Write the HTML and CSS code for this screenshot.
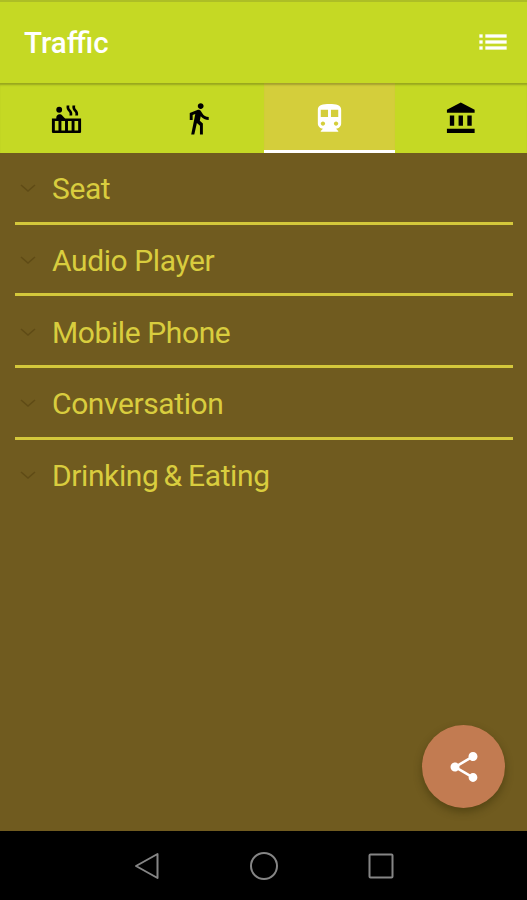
FILE: index.html
```html
<!DOCTYPE html>
<html lang="en">
<head>
  <meta charset="UTF-8">
  <meta name="viewport" content="width=device-width, initial-scale=1.0">
  <title>Traffic</title>
  <link rel="stylesheet" href="styles.css">
</head>
<body>
  <div class="app">
    <header class="toolbar">
      <h1 class="title">Traffic</h1>
      <svg class="icon menu-icon" viewBox="0 0 24 24"><path d="M3 13h2v-2H3v2zm0 4h2v-2H3v2zm0-8h2V7H3v2zm4 4h14v-2H7v2zm0 4h14v-2H7v2zM7 7v2h14V7H7z"/></svg>
    </header>

    <nav class="tabs">
      <div class="tab">
        <svg class="icon" viewBox="0 0 24 24"><circle cx="7" cy="6" r="2"/><path d="M11.15 12c-.31-.22-.59-.46-.82-.72l-1.4-1.55c-.19-.21-.43-.38-.69-.5-.29-.14-.62-.23-.96-.23h-.03C6.01 9 5 10.01 5 11.25V12H2v9c0 .6.4 1 1 1h18c.6 0 1-.4 1-1v-9H11.15zM6.500 20.300H4v-6.600h2.500v6.600zm4.500 0H8.500v-6.600H11v6.600zm4.500 0H13v-6.600h2.500v6.600zm4.500 0h-2.500v-6.600H20v6.600zM18.650 5.860l-.07-.07c-.57-.62-.82-1.410-.67-2.200L18 3h-1.890l-.06.43c-.2 1.360.27 2.710 1.300 3.720l.07.06c.57.62.82 1.410.67 2.200l-.11.59h1.910l.06-.43c.21-1.360-.27-2.710-1.300-3.710zm-4 0l-.07-.07c-.57-.62-.82-1.410-.67-2.200L14 3h-1.890l-.06.43c-.2 1.360.27 2.710 1.300 3.720l.07.06c.57.62.82 1.410.67 2.200l-.11.59h1.910l.06-.43c.21-1.360-.27-2.710-1.300-3.710z"/></svg>
      </div>
      <div class="tab">
        <svg class="icon" viewBox="0 0 24 24"><path d="M13.5 5.5c1.1 0 2-.9 2-2s-.9-2-2-2-2 .9-2 2 .9 2 2 2zM9.8 8.900L7 23h2.100l1.800-8 2.100 2v6h2v-7.500l-2.100-2 .6-3C14.800 12 16.800 13 19 13v-2c-1.900 0-3.500-1-4.300-2.400l-1-1.600c-.4-.6-1-1-1.700-1-.3 0-.5.1-.8.1L6 8.300V13h2V9.600l1.800-.7"/></svg>
      </div>
      <div class="tab active">
        <svg class="icon" viewBox="0 0 24 24"><path d="M12 2c-4.420 0-8 .5-8 4v9.500C4 17.430 5.570 19 7.500 19L6 20.500v.5h12v-.5L16.500 19c1.930 0 3.500-1.570 3.500-3.500V6c0-3.500-3.580-4-8-4zM7.500 17c-.83 0-1.500-.67-1.500-1.500S6.670 14 7.500 14s1.500.67 1.500 1.500S8.330 17 7.500 17zm3.500-6H6V6h5v5zm5.500 6c-.83 0-1.500-.67-1.500-1.500s.67-1.500 1.500-1.500 1.500.67 1.500 1.500-.67 1.500-1.500 1.500zm1.500-6h-5V6h5v5z"/></svg>
      </div>
      <div class="tab">
        <svg class="icon" viewBox="0 0 24 24"><path d="M4 10v7h3v-7H4zm6 0v7h3v-7h-3zM2 22h19v-3H2v3zm14-12v7h3v-7h-3zm-4.500-9L2 6v2h19V6l-9.500-5z"/></svg>
      </div>
    </nav>

    <main class="content">
      <ul class="list">
        <li class="item"><svg class="chevron" viewBox="0 0 16 9"><path d="M1 1l7 6 7-6"/></svg><span>Seat</span></li>
        <li class="item"><svg class="chevron" viewBox="0 0 16 9"><path d="M1 1l7 6 7-6"/></svg><span>Audio Player</span></li>
        <li class="item"><svg class="chevron" viewBox="0 0 16 9"><path d="M1 1l7 6 7-6"/></svg><span>Mobile Phone</span></li>
        <li class="item"><svg class="chevron" viewBox="0 0 16 9"><path d="M1 1l7 6 7-6"/></svg><span>Conversation</span></li>
        <li class="item"><svg class="chevron" viewBox="0 0 16 9"><path d="M1 1l7 6 7-6"/></svg><span>Drinking<span class="amp">&amp;</span>Eating</span></li>
      </ul>
      <div class="fab">
        <svg class="icon share-icon" viewBox="0 0 24 24"><path d="M18 16.080c-.76 0-1.440.3-1.960.77L8.910 12.700c.05-.23.09-.46.09-.7s-.04-.47-.09-.7l7.050-4.110c.54.5 1.250.81 2.040.81 1.660 0 3-1.340 3-3s-1.340-3-3-3-3 1.340-3 3c0 .24.04.47.09.7L8.040 9.810C7.500 9.310 6.790 9 6 9c-1.660 0-3 1.340-3 3s1.340 3 3 3c.79 0 1.500-.31 2.040-.81l7.120 4.160c-.05.21-.08.43-.08.65 0 1.610 1.310 2.920 2.920 2.920s2.920-1.310 2.920-2.920-1.310-2.920-2.920-2.920z"/></svg>
      </div>
    </main>

    <footer class="navbar">
      <svg class="nav-icon" viewBox="0 0 28 28"><path d="M24.500 2v24L3 14z"/></svg>
      <svg class="nav-icon" viewBox="0 0 28 28"><circle cx="14" cy="14" r="13"/></svg>
      <svg class="nav-icon" viewBox="0 0 28 28"><rect x="2.500" y="2.500" width="23" height="23" rx="1"/></svg>
    </footer>
  </div>
</body>
</html>
```
FILE: styles.css
```css
body {
  margin: 0;
  font-family: Roboto, Arial, sans-serif;
  background-color: #000;
}

.app {
  display: flex;
  flex-direction: column;
  height: 900px;
  overflow: hidden;
}

.icon {
  width: 35px;
  height: 35px;
  fill: currentColor;
}

.toolbar {
  box-sizing: border-box;
  display: flex;
  align-items: center;
  justify-content: space-between;
  height: 83px;
  padding: 0 16px 2px 24px;
  border-top: 2px solid #adbe26;
  background-color: #c5d924;
  color: #fff;
}

.title {
  margin: 2px 0 0;
  font-size: 29.5px;
  font-weight: 500;
}

.menu-icon {
  width: 36px;
  height: 36px;
  stroke: currentColor;
  stroke-width: 0.2;
}

.tabs {
  display: grid;
  grid-template-columns: repeat(4, 1fr);
  height: 70px;
  background-color: #c5d924;
  box-shadow: inset 0 3px 2px -1px #98a71e;
}

.tab {
  box-sizing: border-box;
  display: flex;
  justify-content: center;
  padding: 17.5px 0 0 1px;
  color: #000;
}

.active {
  background-color: #d4ce3b;
  border-bottom: 3px solid #fff;
  box-shadow: inset 0 3px 2px -1px #a59f2d;
  color: #fff;
}

.content {
  position: relative;
  flex: 1;
  background-color: #705b1f;
}

.list {
  margin: 0;
  padding: 0 14px 0 15px;
  list-style: none;
}

.item {
  box-sizing: border-box;
  display: flex;
  align-items: center;
  height: 71.7px;
  padding: 3px 0 0 5px;
  border-bottom: 3px solid #d4c83b;
  color: #d9cd3e;
  font-size: 30px;
  letter-spacing: -0.4px;
}

.item:last-child {
  border-bottom-color: transparent;
}

.chevron {
  width: 16px;
  height: 9px;
  margin-right: 16px;
  fill: none;
  stroke: #5f4b16;
  stroke-width: 1.5;
}

.amp {
  margin: 0 6px 0 5px;
  letter-spacing: 0;
}

/* floating share button */
.fab {
  position: absolute;
  right: 22px;
  bottom: 23px;
  display: flex;
  align-items: center;
  justify-content: center;
  width: 83px;
  height: 83px;
  border-radius: 50%;
  background-color: #c27b51;
  box-shadow: 0 4px 8px rgba(40, 35, 0, 0.4);
  color: #fff;
}

.share-icon {
  width: 36px;
  height: 36px;
}

.navbar {
  display: flex;
  align-items: center;
  justify-content: center;
  gap: 89px;
  height: 69px;
  background-color: #000;
}

.nav-icon {
  width: 28px;
  height: 28px;
  fill: none;
  stroke: #858585;
  stroke-width: 2;
  stroke-linejoin: round;
}
```
